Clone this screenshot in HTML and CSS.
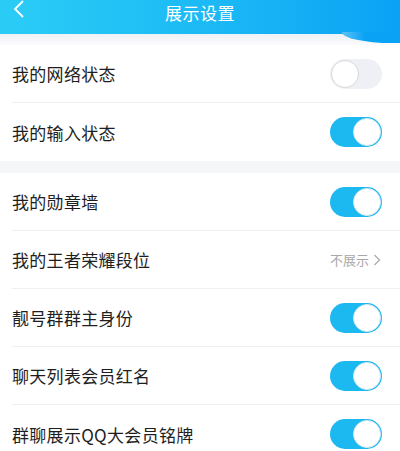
FILE: index.html
```html
<!DOCTYPE html>
<html lang="zh-CN">
<head>
  <meta charset="UTF-8" />
  <meta name="viewport" content="width=device-width, initial-scale=1.0"/>
  <title>展示设置</title>
  <link rel="stylesheet" href="styles.css">
</head>
<body>
  <div class="topbar">
    <svg class="back" width="12" height="18" viewBox="0 0 12 18">
      <path d="M10 1 L2 9 L10 17" fill="none" stroke="#fff" stroke-width="1.8" />
    </svg>
    <span class="title">展示设置</span>
  </div>
  <div class="gap top-gap"></div>

  <div class="group">
    <div class="row">
      <span class="label">我的网络状态</span>
      <span class="switch off"><i></i></span>
    </div>
    <div class="row">
      <span class="label">我的输入状态</span>
      <span class="switch"><i></i></span>
    </div>
  </div>

  <div class="gap"></div>

  <div class="group">
    <div class="row">
      <span class="label">我的勋章墙</span>
      <span class="switch"><i></i></span>
    </div>
    <div class="row">
      <span class="label">我的王者荣耀段位</span>
      <span class="more">不展示<svg width="8" height="12" viewBox="0 0 8 12"><path d="M1.5 1 L6.5 6 L1.5 11" fill="none" stroke="#b0b0b0" stroke-width="1.4"/></svg></span>
    </div>
    <div class="row">
      <span class="label">靓号群群主身份</span>
      <span class="switch"><i></i></span>
    </div>
    <div class="row">
      <span class="label">聊天列表会员红名</span>
      <span class="switch"><i></i></span>
    </div>
    <div class="row">
      <span class="label">群聊展示QQ大会员铭牌</span>
      <span class="switch"><i></i></span>
    </div>
  </div>
</body>
</html>
```

FILE: styles.css
```css
body {
  margin: 0;
  width: 400px;
  height: 451px;
  overflow: hidden;
  background: #fff;
  font-family: "Noto Sans CJK SC", "Noto Sans", sans-serif;
  color: #1e1e1e;
}
.topbar {
  position: relative;
  height: 34px;
  background: linear-gradient(90deg, #2bcdf6 0%, #1bb8f5 55%, #0aa2f4 100%);
  display: flex;
  justify-content: center;
  align-items: flex-start;
}
/* little swoosh under the right end of the bar */
.topbar::after {
  content: "";
  position: absolute;
  right: 0;
  top: 32px;
  width: 58px;
  height: 11px;
  background: linear-gradient(90deg, #5cc3f6, #0aa2f4 40%);
  border-radius: 0 0 0 50px / 0 0 0 11px;
}
.back {
  position: absolute;
  left: 13px;
  top: 0;
}
.title {
  color: #fff;
  font-size: 17px;
  line-height: 25px;
  margin-top: -1px;
  padding-top: 1px;
  letter-spacing: 0.5px;
}
.gap {
  height: 12px;
  background: #f5f6f8;
}
.top-gap {
  height: 11px;
  background: linear-gradient(#eef1f5, #fbfbfc);
}
.group {
  background: #fff;
}
.row {
  height: 58px;
  box-sizing: border-box;
  margin-left: 12px;
  padding-right: 18px;
  border-bottom: 1px solid #eeeff1;
  display: flex;
  align-items: center;
  justify-content: space-between;
}
.group .row:last-child {
  border-bottom: none;
}
.label {
  font-size: 17px;
  letter-spacing: 0.3px;
}
.switch {
  width: 52px;
  height: 30px;
  box-sizing: border-box;
  border-radius: 15px;
  background: #1cb9f1;
  display: flex;
  align-items: center;
  justify-content: flex-end;
  padding: 0 1px;
}
.switch i {
  width: 28px;
  height: 28px;
  box-sizing: border-box;
  border-radius: 50%;
  background: #fff;
  border: 1px solid #d6e8ef;
}
.switch.off {
  background: #eef0f5;
  justify-content: flex-start;
}
.switch.off i {
  border-color: #d8d8d8;
}
.more {
  font-size: 13px;
  color: #a8a8a8;
  display: flex;
  align-items: center;
  gap: 4px;
  padding-right: 1px;
}
```
